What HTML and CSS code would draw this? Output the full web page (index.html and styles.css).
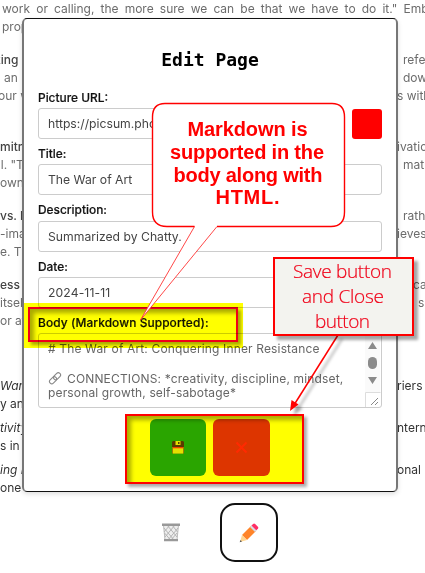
FILE: index.html
```html
<!DOCTYPE html>
<html lang="en">
<head>
<meta charset="utf-8">
<title>Edit Page</title>
<link rel="stylesheet" href="styles.css">
</head>
<body>
<main class="article">
  <section class="intro"><p class="lead">work or calling, the more sure we can be that we have to do it." Emb</p><p><span class="in">prop</span></p></section>
  <section class="first"><p><b class="cut">king</b><span>refe</span></p><p><span class="an">an</span><span>dow</span></p><p><span class="our">our w</span><span class="wide">s with</span></p></section>
  <section class="second"><p><b>mitm</b><span class="wide">ivatio</span></p><p><span class="cut">al. "T</span><span>mat</span></p><p><span>own</span></p></section>
  <section><p><b>vs. E</b><span>rath</span></p><p><span>-ima</span><span class="wide">ieves</span></p><p><span>e. Th</span></p></section>
  <section><p><b>ess</b><span class="ca">ca</span></p><p><span>itself</span><span class="s">s</span></p><p><span>or at</span></p></section>
  <section class="dark list"><p><i>War</i><span class="wide">riers t</span></p><p><span>y and</span></p></section>
  <section class="dark item"><p><i>tivity</i><span class="wide">ntern</span></p><p><span>s in</span></p></section>
  <section class="dark item"><p><i>ing F</i><span class="wide">onal</span></p><p><span>one</span></p></section>
</main>

<form class="dialog">
  <h1>Edit Page</h1>
  <label>Picture URL:</label>
  <div class="row"><div class="input">https://picsum.pho</div><div class="swatch"></div></div>
  <label>Title:</label>
  <div class="input">The War of Art</div>
  <label class="desc">Description:</label>
  <div class="input">Summarized by Chatty.</div>
  <label>Date:</label>
  <div class="input date">2024-11-11</div>
  <label class="body-label">Body (Markdown Supported):</label>
  <div class="textarea">
    <div class="copy"><p class="l1"># The War of Art: Conquering Inner Resistance</p><p class="l2"><svg width="14" height="13" viewBox="0 0 14 13" fill="none" stroke="#888" stroke-width="1.1"><rect x="5" y="2" width="8" height="4.5" rx="2.2" transform="rotate(-45 9 4.2)"/><rect x="1" y="6" width="8" height="4.5" rx="2.2" transform="rotate(-45 5 8.2)"/></svg><span>CONNECTIONS: *creativity, discipline, mindset,</span></p><p class="l3">personal growth, self-sabotage*</p></div>
    <svg class="scroll" width="16" height="73" viewBox="0 0 16 73"><path fill="#fafafa" d="M0 0h15v58H0z"/><g fill="#8b8b8b"><path d="M7.5 8 12 15H3zM7.5 50 12 43H3z"/><rect x="3" y="23" width="9" height="12" rx="4.5"/></g><path d="M.5 73V58.500h15" fill="none" stroke="#ddd"/><path d="M6 71l7-7M10 71l3-3" fill="none" stroke="#888"/></svg>
  </div>
  <div class="buttons">
    <div class="btn save"><svg width="12" height="13" viewBox="0 0 12 13"><path fill="#583b00" d="M1 0h10l1 1v5H0V1z"/><path fill="#e5df00" d="M3.500 0h5v4h-5z"/><path fill="#583b00" d="M6 1h1.500v2H6z"/><path fill="#9a8000" d="M0 6h12v6.500H0z"/><path fill="#e5df00" d="M1 7h10v5.500H1z"/><path fill="#f04000" d="M1 6h10v1.300H1z"/></svg></div>
    <div class="btn close"><svg width="13" height="13" viewBox="0 0 13 13"><path d="M1.500 1.500 11.500 11.500M11.500 1.500 1.500 11.500" stroke="#ff2a00" stroke-width="2"/></svg></div>
  </div>
</form>

<footer class="tools">
  <svg width="18" height="19" viewBox="0 0 18 19"><path d="M1.500 2h15l-1.500 15H3z" fill="#eee" stroke="#bbb"/><path d="M2 5l10 12M5 2l10 12M10 2l5.500 7M2.500 10l6 7M16 5 6 17M13 2 3 14M8 2 2 9M15 10l-6 7" stroke="#b5b5b5" fill="none"/><path fill="#999" d="M0 .5h18V3H0zM2 16h14v2.300H2z"/></svg>
  <div class="edit"><svg width="20" height="20" viewBox="0 0 20 20"><path fill="#ff8429" d="M3 12 12 3l5 5-9 9z"/><path fill="#ffd590" d="m3 12-2 7 7-2z"/><path fill="#555" d="m1.500 17-.8 2.300 2.300-.8z"/><path fill="#d7dce8" d="m11 4 2-2 5 5-2 2z"/><path fill="#ff2f65" d="m12.500 2.500 1.600-1.600q1-.8 2 0l2.800 2.800q.8 1 0 2l-1.600 1.600z"/></svg></div>
</footer>

<div class="marker body-mark"><div class="frame"></div></div>
<div class="marker button-mark"><div class="frame"></div></div>

<svg class="notes" width="425" height="573" viewBox="0 0 425 573">
  <defs><filter id="shadow" x="-20%" y="-20%" width="150%" height="150%"><feDropShadow dx="4" dy="4" stdDeviation="1.500" flood-color="#000" flood-opacity=".35"/></filter></defs>
  <path d="M165 103.500H332Q344.500 103.500 344.500 117V212Q344.500 226.500 331 226.500H217L140.500 320 194.500 226.500H167Q152.500 226.500 152.500 212V117Q152.500 103.500 165 103.500Z" fill="#fff"/>
  <path d="M217 226.500 140.500 320 194.500 226.500" fill="none" stroke="#f33" stroke-width=".9"/>
  <path d="M217 226.500H331Q344.500 226.500 344.500 212V117Q344.500 103.500 332 103.500H165Q152.500 103.500 152.500 117V212Q152.500 226.500 167 226.500H194.500" fill="none" stroke="red" stroke-width="1.400"/>
  <g class="bubble-text"><text x="187.500" y="136" textLength="120">Markdown is</text><text x="170" y="158.700" textLength="154">supported in the</text><text x="173.500" y="181.500" textLength="149">body along with</text><text x="215.500" y="204" textLength="64">HTML.</text></g>
  <g filter="url(#shadow)"><path d="M338 335 294 405" stroke="red" stroke-width="1.500"/><path d="m290 411 1.500-11 7 4.500z" fill="red"/></g>
  <rect x="274" y="258" width="139" height="77" fill="#f3f3ef" stroke="red" stroke-width="2" filter="url(#shadow)"/>
  <g class="box-text"><text x="293" y="278" textLength="99">Save button</text><text x="302" y="303" textLength="82">and Close</text><text x="315" y="328" textLength="55">button</text></g>
</svg>
</body>
</html>
```
FILE: styles.css
```css
* { box-sizing: border-box; }
body { margin: 0; width: 425px; height: 573px; overflow: hidden; position: relative; background: #fff; font-family: Inter, "Open Sans", sans-serif; }
p { margin: 0; }
.article { height: 497px; font-size: 12px; line-height: 18px; color: #6c6c6c; }
.article section { margin-bottom: 15px; }
.article section.second { margin-top: 33px; }
.article .list { margin-top: 47px; margin-bottom: 6px; }
.article .item { margin-bottom: 6px; }
.article p { display: flex; height: 18px; white-space: nowrap; justify-content: space-between; }
.article p > :first-child { width: 24px; }
.article p > :nth-child(2) { width: 22px; }
.article p > .wide:nth-child(2) { width: 28px; }
.article p > .ca:nth-child(2) { width: 12px; }
.article p > .s:nth-child(2) { width: 7px; }
.article .in { padding-left: 2px; }
.article .an { padding-left: 4px; }
.article .cut { text-indent: -6px; }
.article .our { text-indent: -2px; }
.article b { font-weight: 500; color: #444; }
.article .dark { color: #333; }
.article p.lead { display: block; padding-left: 2px; word-spacing: 2.75px; }
.dialog { position: absolute; left: 22px; top: 18px; width: 376px; height: 474px; padding: 0 14px; background: #fff; border: 1px solid #111; border-left: 2px solid #777; border-right: 2px solid #777; border-radius: 5px; box-shadow: 0 2px 5px #0002; }
h1 { margin: 29px 0 17px; font: bold 18px/24px "DejaVu Sans Mono", monospace; text-align: center; }
label { display: block; height: 25.300px; padding-top: 6px; font-size: 11.900px; line-height: 18px; font-weight: 500; color: #111; -webkit-text-stroke: .2px #222; }
h1 + label { height: 19px; padding-top: 0; }
.input { height: 31px; padding-left: 9px; border: 1px solid #ccc; border-radius: 3px; background: #fff; font-size: 12.200px; line-height: 30px; color: #444; white-space: nowrap; }
.date { letter-spacing: .1px; }
.row { display: flex; justify-content: space-between; }
.row .input { width: 306px; }
.swatch { width: 30px; height: 30px; margin-top: 1px; background: red; border-radius: 3px; }
.body-label { letter-spacing: .1px; }
.textarea { display: flex; justify-content: space-between; height: 75px; border: 1px solid #ccc; border-radius: 3px; }
.copy { padding: 8px 0 0 9px; font-size: 12px; letter-spacing: .15px; line-height: 14.500px; color: #666; white-space: nowrap; }
.l2 { display: flex; gap: 5px; margin-top: 15px; }
.buttons { display: flex; justify-content: center; gap: 7px; margin: 11px 0 0; }
.btn { display: flex; align-items: center; justify-content: center; width: 56px; height: 57px; border-radius: 6px; }
.save { background: #2aa504; }
.close { background: #dd3500; width: 57px; }
.tools { display: flex; align-items: center; gap: 40px; padding: 6px 0 0 162px; }
.edit { display: flex; align-items: center; justify-content: center; width: 58px; height: 59px; border: 2px solid #111; border-radius: 15px; }
.marker { position: absolute; mix-blend-mode: multiply; background: #ff0; }
.body-mark { left: 24px; top: 303px; width: 219px; height: 45px; padding: 4px; }
.button-mark { left: 125px; top: 414px; width: 179px; height: 70px; }
.frame { height: 35px; width: 210px; border: 2px solid #f00018; box-shadow: 3px 3px 3px #0005, inset 4px 4px 4px #0005; }
.button-mark .frame { width: 100%; height: 100%; border-color: red; }
.notes { position: absolute; left: 0; top: 0; }
.bubble-text { font: bold 20px "Liberation Sans", sans-serif; fill: red; }
.box-text { font: 300 19px "Open Sans", sans-serif; fill: #f00018; stroke: #f00018; stroke-width: .2px; }
```
